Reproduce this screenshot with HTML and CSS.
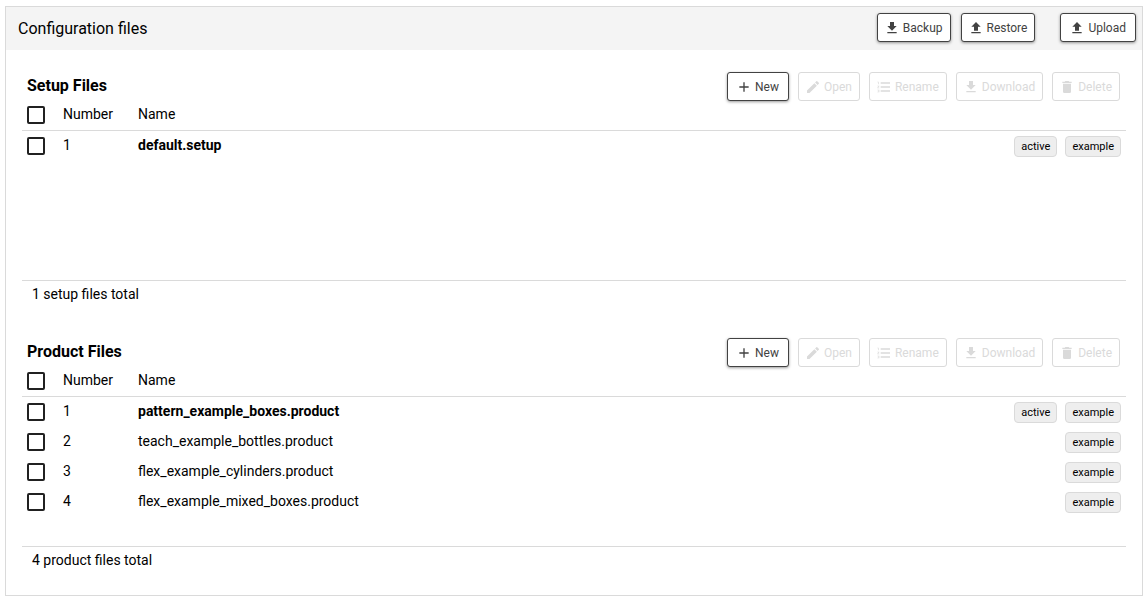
FILE: index.html
```html
<!DOCTYPE html>
<html lang="en">
<head>
<meta charset="utf-8">
<title>Configuration files</title>
<link rel="stylesheet" href="styles.css">
</head>
<body>
<svg class="sprite" aria-hidden="true">
  <symbol id="down" viewBox="0 0 24 24"><path d="M5 20h14v-2H5zM19 9h-4V3H9v6H5l7 7z"/></symbol>
  <symbol id="up" viewBox="0 0 24 24"><path d="M5 20h14v-2H5zM9 16h6v-6h4l-7-7-7 7h4z"/></symbol>
  <symbol id="plus" viewBox="0 0 24 24"><path d="M19 13h-6v6h-2v-6H5v-2h6V5h2v6h6z"/></symbol>
  <symbol id="pencil" viewBox="0 0 24 24"><path d="M3 17.25V21h3.75L17.81 9.94l-3.75-3.75zM20.71 7.04a1 1 0 0 0 0-1.41l-2.34-2.34a1 1 0 0 0-1.41 0l-1.83 1.83 3.75 3.75z"/></symbol>
  <symbol id="list" viewBox="0 0 24 24"><path d="M2 17h2v.5H3v1h1v.5H2v1h3v-4H2zM3 8h1V4H2v1h1zM2 11h1.8L2 13.100v.9h3v-1H3.200L5 10.900V10H2zM7 5v2h14V5zM7 19h14v-2H7zM7 13h14v-2H7z"/></symbol>
  <symbol id="trash" viewBox="0 0 24 24"><path d="M6 19a2 2 0 0 0 2 2h8a2 2 0 0 0 2-2V7H6zM19 4h-3.500l-1-1h-5l-1 1H5v2h14z"/></symbol>
</svg>
<main class="panel">
  <header class="panel-header">
    <h1 class="panel-title">Configuration files</h1>
    <div class="header-actions">
      <button class="btn" type="button"><svg class="icon"><use href="#down"/></svg>Backup</button>
      <button class="btn" type="button"><svg class="icon"><use href="#up"/></svg>Restore</button>
      <button class="btn btn-apart" type="button"><svg class="icon"><use href="#up"/></svg>Upload</button>
    </div>
  </header>

  <section class="files">
    <div class="toolbar">
      <h2 class="files-title">Setup Files</h2>
      <div class="actions">
        <button class="btn" type="button"><svg class="icon"><use href="#plus"/></svg>New</button>
        <button class="btn" type="button" disabled><svg class="icon"><use href="#pencil"/></svg>Open</button>
        <button class="btn" type="button" disabled><svg class="icon"><use href="#list"/></svg>Rename</button>
        <button class="btn" type="button" disabled><svg class="icon"><use href="#down"/></svg>Download</button>
        <button class="btn" type="button" disabled><svg class="icon"><use href="#trash"/></svg>Delete</button>
      </div>
    </div>
    <div class="table-area">
      <table class="table">
        <thead>
          <tr><th class="col-check"><input class="check" type="checkbox" aria-label="Select all setup files"></th><th class="col-number">Number</th><th>Name</th><th class="col-tags"></th></tr>
        </thead>
        <tbody>
          <tr><td class="col-check"><input class="check" type="checkbox" aria-label="Select default.setup"></td><td>1</td><td class="current">default.setup</td><td class="col-tags"><div class="tags"><span class="tag">active</span><span class="tag">example</span></div></td></tr>
        </tbody>
      </table>
    </div>
    <p class="total">1 setup files total</p>
  </section>

  <section class="files">
    <div class="toolbar">
      <h2 class="files-title">Product Files</h2>
      <div class="actions">
        <button class="btn" type="button"><svg class="icon"><use href="#plus"/></svg>New</button>
        <button class="btn" type="button" disabled><svg class="icon"><use href="#pencil"/></svg>Open</button>
        <button class="btn" type="button" disabled><svg class="icon"><use href="#list"/></svg>Rename</button>
        <button class="btn" type="button" disabled><svg class="icon"><use href="#down"/></svg>Download</button>
        <button class="btn" type="button" disabled><svg class="icon"><use href="#trash"/></svg>Delete</button>
      </div>
    </div>
    <div class="table-area">
      <table class="table">
        <thead>
          <tr><th class="col-check"><input class="check" type="checkbox" aria-label="Select all product files"></th><th class="col-number">Number</th><th>Name</th><th class="col-tags"></th></tr>
        </thead>
        <tbody>
          <tr><td class="col-check"><input class="check" type="checkbox" aria-label="Select pattern_example_boxes.product"></td><td>1</td><td class="current">pattern_example_boxes.product</td><td class="col-tags"><div class="tags"><span class="tag">active</span><span class="tag">example</span></div></td></tr>
          <tr><td class="col-check"><input class="check" type="checkbox" aria-label="Select teach_example_bottles.product"></td><td>2</td><td>teach_example_bottles.product</td><td class="col-tags"><div class="tags"><span class="tag">example</span></div></td></tr>
          <tr><td class="col-check"><input class="check" type="checkbox" aria-label="Select flex_example_cylinders.product"></td><td>3</td><td>flex_example_cylinders.product</td><td class="col-tags"><div class="tags"><span class="tag">example</span></div></td></tr>
          <tr><td class="col-check"><input class="check" type="checkbox" aria-label="Select flex_example_mixed_boxes.product"></td><td>4</td><td>flex_example_mixed_boxes.product</td><td class="col-tags"><div class="tags"><span class="tag">example</span></div></td></tr>
        </tbody>
      </table>
    </div>
    <p class="total">4 product files total</p>
  </section>
</main>
</body>
</html>
```
FILE: styles.css
```css
* {
  box-sizing: border-box;
}

body {
  margin: 0;
  padding: 6px 5px 4px;
  background: #fff;
  color: #000;
  font-family: Roboto, "Liberation Sans", sans-serif;
  font-size: 14px;
  line-height: 20px;
}

.sprite {
  display: none;
}

.panel {
  border: 1px solid #dadada;
  padding-bottom: 13px;
}

.panel-header {
  display: flex;
  align-items: center;
  justify-content: space-between;
  padding: 6px 6px 8px 12px;
  background: #f4f4f4;
}

.panel-title {
  margin: 0;
  padding-top: 2px;
  font-size: 16px;
  font-weight: 400;
}

.header-actions {
  display: flex;
  gap: 10px;
}

.btn {
  display: flex;
  align-items: center;
  justify-content: center;
  gap: 3px;
  min-width: 62px;
  height: 29px;
  padding: 0 7px 0 6px;
  border: 1px solid #424242;
  border-radius: 3px;
  background: #fff;
  color: #424242;
  box-shadow: 0 1px 3px rgba(0, 0, 0, 0.4);
  font: inherit;
  font-size: 12px;
}

.btn-apart {
  margin-left: 15px;
  padding: 0 9px 0 8px;
}

.btn:disabled {
  border-color: #dadada;
  color: #dadada;
  box-shadow: none;
}

.icon {
  width: 16px;
  height: 16px;
  fill: currentColor;
}

.files {
  padding: 22px 16px 12px;
}

.toolbar {
  display: flex;
  align-items: center;
  justify-content: space-between;
  padding: 0 6px 0 5px;
}

.files-title {
  margin: 0 0 2px;
  font-size: 16px;
  font-weight: 700;
}

.actions {
  display: flex;
  gap: 9px;
}

.table-area {
  min-height: 180px;
  border-bottom: 1px solid #dadada;
}

.table {
  width: 100%;
  border-collapse: separate;
  border-spacing: 0;
  table-layout: fixed;
}

.table th,
.table td {
  padding: 0;
  text-align: left;
  font-weight: 400;
  vertical-align: top;
}

.table th {
  height: 30px;
  padding-top: 3px;
  border-bottom: 1px solid #dadada;
}

.table td {
  height: 30px;
  padding-top: 4px;
}

.table .col-check {
  width: 41px;
  padding-top: 5px;
  padding-left: 5px;
}

.table td.col-check {
  padding-top: 6px;
}

.col-number {
  width: 75px;
}

.table .current {
  font-weight: 700;
}

.table .col-tags {
  width: 160px;
  padding-right: 5px;
}

.check {
  display: block;
  appearance: none;
  width: 18px;
  height: 18px;
  margin: 0;
  border: 2px solid #212121;
  border-radius: 2px;
  background: #fff;
}

.check:checked {
  background: #212121;
}

.tags {
  display: flex;
  justify-content: flex-end;
  gap: 8px;
  padding-top: 1px;
}

.tag {
  padding: 0 6px;
  border: 1px solid #dadada;
  border-radius: 4px;
  background: #eee;
  font-size: 11px;
  line-height: 19px;
}

.total {
  margin: 0;
  padding: 3px 10px 0;
}
```
